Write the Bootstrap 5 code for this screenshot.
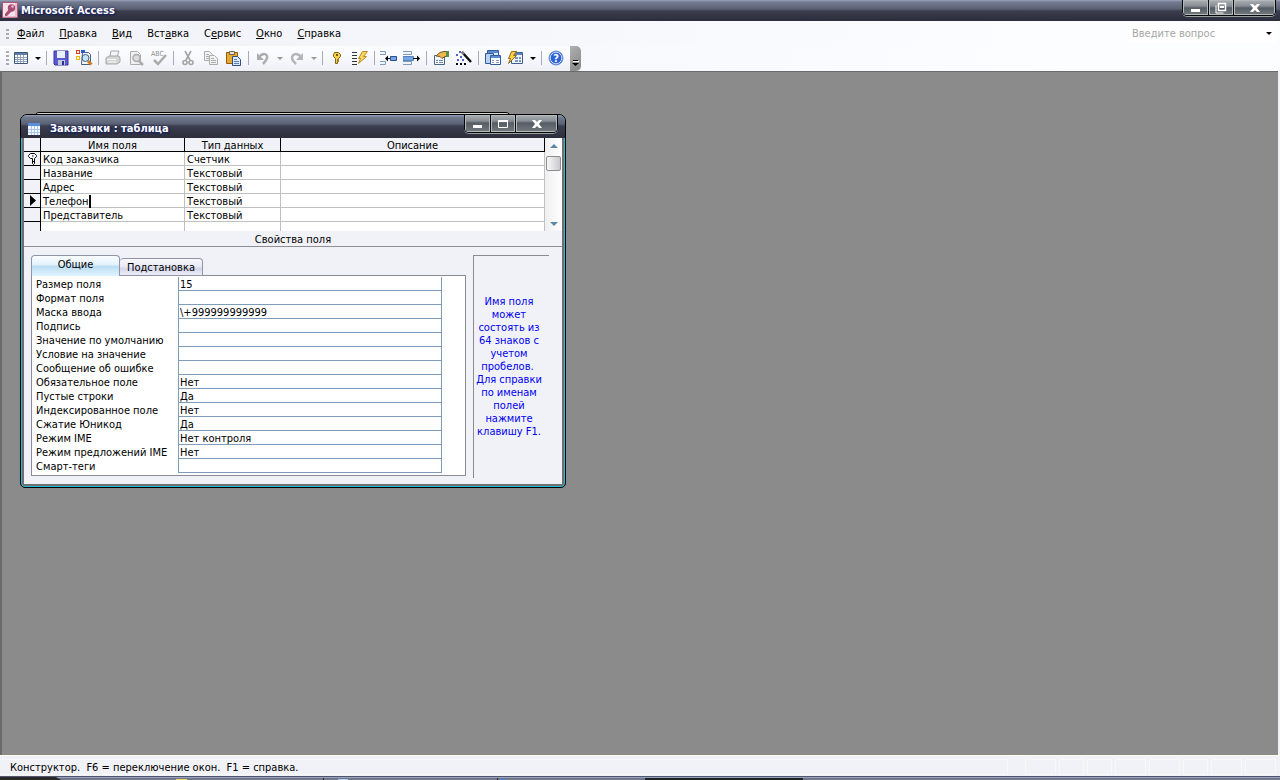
<!DOCTYPE html>
<html lang="ru">
<head>
<meta charset="utf-8">
<meta name="viewport" content="width=device-width, initial-scale=1">
<title>Microsoft Access</title>
<link href="https://cdn.jsdelivr.net/npm/bootstrap@5.3.0/dist/css/bootstrap.min.css" rel="stylesheet">
<style>
:root { --face:#f1f2f8; --grid:#7f9db9; }
body { font:11px/14px "DejaVu Sans Condensed","DejaVu Sans",sans-serif; color:#000; background:var(--face); }
button, input { font:inherit; color:inherit; background:none; border:0; padding:0; margin:0; border-radius:0; outline:0; }
svg { display:block; }
.caption-bar { background:linear-gradient(#9ba4bd 0,#737b90 2px,#5b6174 9px,#3a3d4e 11px,#2c2e3c 100%); color:#fff; font-weight:700; text-shadow:0 0 3px #1c2470,1px 1px 2px #101850; }
.app-caption { height:21px; padding-top:1px; }
.app-caption > svg { margin:1px 3px 0 2px; }
.app-caption .win-keys { margin-top:-1px; }
.win-keys { border:1px solid #050608; border-top:0; border-radius:0 0 5px 5px; box-shadow:0 1px 0 #98a0a0; overflow:hidden; }
.win-keys button { height:15px; background:linear-gradient(#aab0b5 0,#878d93 6px,#555c65 8px,#747c80 100%); box-shadow:inset 0 0 0 1px #b3b8bb; display:flex; align-items:center; justify-content:center; }
.doc-caption .win-keys button { height:17px; }
.win-keys button + button { border-left:1px solid #0c0d10; }
.key-n { width:25px; } .key-w { width:42px; }
.menu-strip { height:25px; padding-left:6px; background:linear-gradient(90deg,#f1f2f8,#fcfdff 85%); }
.menu-strip a { color:#000; padding:0 7px 0 8px; text-decoration:none; }
.grip { width:3px; height:10px; background:repeating-linear-gradient(#a9abb3 0 2px,transparent 2px 4px); }
.ask-box { width:148px; height:19px; background:#fff; }
.ask-box input::placeholder { color:#a6a6a6; opacity:1; }
.tool-strip { height:25px; padding-left:6px; background:linear-gradient(#fcfdff 0,#f8f9fd 45%,#eff0f6 100%); }
.tool-strip .grip { height:14px; margin-top:5px; }
.tool-shade { background:linear-gradient(90deg,#f3f4fa,#fcfdff 85%); }
.tool-strip .tb { width:23px; height:24px; display:flex; align-items:center; justify-content:center; }
.tool-strip .dd { width:11px; height:24px; display:flex; align-items:center; justify-content:center; }
.tri { border:3px solid transparent; border-top-color:#000; border-bottom:0; width:0; height:0; }
.tri.off { border-top-color:#9a9a9a; }
.sep { width:1px; height:14px; background:#a9abb2; margin:5px 2px 0 3px; }
.more-key { width:11px; height:25px; background:linear-gradient(135deg,#b0b0b0,#858585); border-radius:0 5px 5px 0; color:#000; }
.tool-strip .more-key { margin-left:3px; }
.desk { background:#8b8b8b; border:solid #6b6b6b; border-width:1px 0 0 2px; margin-right:2px; overflow:hidden; min-height:420px; }
.db-back { left:32px; top:40px; width:477px; height:60px; background:#d8d6cc; border:1px solid #000; border-radius:5px 5px 0 0; }
.doc-win { left:18px; top:42px; width:546px; border:1px solid #000; border-radius:7px 7px 5px 5px; background:#6f6f6f; box-shadow:inset 0 0 0 1px #1cc0d8; padding:0 2px 3px; overflow:hidden; }
.doc-caption { height:23px; margin:0 -2px; padding-left:3px; }
.doc-caption .win-keys { margin-right:7px; }
.doc-caption span { padding-left:10px; }
.doc-body { background:var(--face); margin-left:1px; margin-right:1px; }
.field-view { height:93px; overflow:hidden; background:#fff; }
.fields { border-collapse:separate; border-spacing:0; table-layout:fixed; width:521px; flex:none; }
.fields th, .fields td { height:14px; padding:2px 2px 0; line-height:11px; border-right:1px solid #c0c0c0; border-bottom:1px solid #c0c0c0; white-space:nowrap; font-weight:400; }
.fields thead th { background:var(--face); border-color:#000; text-align:center; padding:2px 0 0; }
.fields tbody th { background:var(--face); border-color:#000; padding:0; }
.fields th svg { margin:auto; }
.caret { position:relative; }
.caret::after { content:""; position:absolute; left:100%; top:0; width:2px; height:13px; background:#000; }
.v-scroll { width:17px; background:linear-gradient(90deg,#efeff0,#fff); padding:6px 0 5px; }
.v-scroll i { border:4px solid transparent; width:0; height:0; }
.v-scroll .up { border-top:0; border-bottom-color:#5d87a8; }
.v-scroll .down { border-bottom:0; border-top-color:#5d87a8; margin-top:auto; }
.thumb { width:15px; height:15px; margin-top:8px; border:1px solid #8d8d8d; border-radius:2px; background:linear-gradient(90deg,#f8f8f8,#c9c9ce); }
.part-title { height:16px; padding-top:1px; line-height:15px; border-bottom:1px solid #8e8e96; text-align:center; }
.props-pane { padding:8px 13px 6px 7px; }
.tab-row { height:21px; margin-bottom:-1px; }
.tab-key { border:1px solid #8f95a5; border-radius:4px 4px 0 0; height:18px; width:83px; padding-top:1px; line-height:16px; background:linear-gradient(#f9f9fd 0,#e6e7f4 50%,#d3d4e8 60%,#eeeefa 100%); }
.tab-key.on { width:89px; height:21px; line-height:18px; padding:0 0 2px; border-bottom:0; background:linear-gradient(#fafdff 0,#e3f1fb 45%,#b9dcf3 50%,#e1f4ff 100%); }
.tab-key + .tab-key { border-left:0; }
.sheet { border:1px solid #8c8a96; background:#fff; width:435px; padding:1px 23px 2px 4px; }
.prop { height:14px; }
.prop label { width:142px; flex:none; white-space:nowrap; line-height:15px; }
.prop input { height:14px; border:solid var(--grid); border-width:0 1px 1px; padding:1px 1px 0; line-height:12px; min-width:0; }
.hint { width:76px; margin-left:7px; border:solid #8c8c90; border-width:1px 0 0 1px; padding:39px 5px 0 0; color:#0000f0; line-height:13px; text-align:center; white-space:nowrap; height:223px; }
.status-bar { height:21px; border-top:1px solid #fcfce8; background:var(--face); padding:3px 4px 1px 0; gap:3px; }
.status-text { border:1px solid #f7f8f8; border-left:0; margin-right:14px; padding-left:10px; line-height:15px; }
.cell-s { border:1px solid #f8f8f6; width:25px; }
.cell-s.wide { width:31px; }
.task-edge { height:4px; border-top:1px solid #50566e; background:linear-gradient(#94a1be 0 1px,#737888 1px); }
</style>
</head>
<body class="d-flex flex-column vh-100 overflow-hidden">
<header>
  <div class="caption-bar app-caption d-flex">
    <svg width="16" height="16" viewBox="0 0 16 16"><rect x=".5" y=".5" width="15" height="15" fill="#f8e2ea" stroke="#b0587c"/><path d="M14 1v14H1" fill="none" stroke="#d59ab2"/><circle cx="9.500" cy="6" r="3.700" fill="#a84c72"/><path d="M7 7l-4 5v2h2l5-5z" fill="#a84c72"/><circle cx="10.500" cy="4.500" r="1.300" fill="#e9b8cc"/></svg>
    <span class="flex-grow-1 align-self-center">Microsoft Access</span>
    <div class="win-keys d-flex align-self-start me-1">
      <button class="key-n" aria-label="Свернуть"><svg width="11" height="11"><path d="M1 7h9v3H1z" fill="#fff"/></svg></button>
      <button class="key-n" aria-label="Восстановить"><svg width="12" height="12"><path d="M3.500 1.500h7v7h-7z" fill="none" stroke="#fff" stroke-width="1.500"/><path d="M5 4h4v2H5z" fill="#fff"/><path d="M1 3.500v7.500h7.500" fill="none" stroke="#fff"/></svg></button>
      <button class="key-w" aria-label="Закрыть"><svg width="12" height="10"><path d="M1 1h3l2 2 2-2h3L8 5l3 4H8L6 7 4 9H1l3-4z" fill="#fff"/></svg></button>
    </div>
  </div>
  <nav class="menu-strip d-flex align-items-center">
    <div class="grip"></div>
    <a href="#"><u>Ф</u>айл</a><a href="#"><u>П</u>равка</a><a href="#"><u>В</u>ид</a><a href="#">Вст<u>а</u>вка</a><a href="#">С<u>е</u>рвис</a><a href="#"><u>О</u>кно</a><a href="#"><u>С</u>правка</a>
    <div class="ask-box d-flex align-items-center ms-auto me-1 ps-1 pe-1">
      <input class="flex-grow-1 w-100" type="text" placeholder="Введите вопрос" aria-label="Введите вопрос">
      <button class="tri" aria-label="Список вопросов"></button>
    </div>
  </nav>
  <div class="tool-shade">
  <div class="tool-strip d-inline-flex align-items-start align-top" role="toolbar" aria-label="Конструктор таблиц">
    <div class="grip"></div>
    <button class="tb" aria-label="Вид"><svg width="16" height="16"><path d="M1.500 2.500h13v11h-13z" fill="#fff" stroke="#3c5878"/><path d="M2 3h12v2H2z" fill="#5d7fa6"/><path d="M4.500 5v8M7.500 5v8M10.500 5v8M2 7.500h12M2 9.500h12M2 11.500h12" stroke="#93a3b6"/></svg></button>
    <button class="dd" aria-label="Виды"><span class="tri"></span></button>
    <span class="sep"></span>
    <button class="tb" aria-label="Сохранить"><svg width="16" height="16"><path d="M1 1h14v14H2l-1-1z" fill="#5a5ad0" stroke="#3434a0"/><path d="M4 1h8v7H4z" fill="#e6efff"/><path d="M5 10h7v5H5z" fill="#c8c8dc"/><path d="M9 11h2v4H9z" fill="#2d2d8c"/></svg></button>
    <button class="tb" aria-label="Поиск файлов"><svg width="18" height="17"><path d="M7.500 2.500h6l2 2v10h-9z" fill="#f4f8fd" stroke="#44607f"/><path d="M1 0h4v4H1z" fill="#e03818"/><path d="M2 1h2v2H2z" fill="#fff"/><path d="M6 0h4v3H6z" fill="#2860d0"/><path d="M1 6h4v4H1z" fill="#f1b900"/><path d="M2 7h2v2H2z" fill="#fff"/><circle cx="10.500" cy="8" r="3.500" fill="#c3e4f8" stroke="#48617c"/><path d="M13 11l3.500 3.500" stroke="#d47b20" stroke-width="3"/></svg></button>
    <span class="sep"></span>
    <button class="tb" aria-label="Печать" disabled><svg width="16" height="16" stroke="#a7a7a7"><path d="M5 6l1-5h8l-2 6" fill="#f4f4f4"/><path d="M1 8l3-2h10l1 2v4l-3 2H1z" fill="#d4d4d4"/><path d="M2 9.500h9M3 12h8M7 3.500h5" fill="none" stroke="#f8f8f8"/></svg></button>
    <button class="tb" aria-label="Предварительный просмотр" disabled><svg width="16" height="16" stroke="#acacac"><path d="M2.500 1.500h7l3 3v10h-10z" fill="#f1f1f1"/><circle cx="8.500" cy="8" r="3.500" fill="#dcdcdc" stroke-width="1.500"/><path d="M11 11l4 4" stroke-width="2.500"/></svg></button>
    <button class="tb" aria-label="Орфография" disabled><svg width="16" height="17"><text x="0" y="6" font-size="7" fill="#8f8f8f">ABC</text><path d="M3 10l4 4 8-9" fill="none" stroke="#ababab" stroke-width="2.500"/></svg></button>
    <span class="sep"></span>
    <button class="tb" aria-label="Вырезать" disabled><svg width="12" height="16" fill="none" stroke="#a4a4a4" stroke-width="1.600"><path d="M3 1l5 9M9 1L4 10"/><circle cx="3" cy="12.500" r="2"/><circle cx="9" cy="12.500" r="2"/></svg></button>
    <button class="tb" aria-label="Копировать" disabled><svg width="16" height="16" fill="#f2f2f2" stroke="#adadad"><path d="M1.500 1.500h5l3 3v6h-8z"/><path d="M6.500 5.500h5l3 3v6h-8z"/><path d="M3 4.500h3M3 6.500h3M3 8.500h3M8 8.500h3M8 10.500h5M8 12.500h5"/></svg></button>
    <button class="tb" aria-label="Вставить"><svg width="17" height="16"><path d="M1.500 2.500h11v11h-11z" fill="#e7aa32" stroke="#965b12"/><path d="M4.500 1.500h5v3h-5z" fill="#ece5cb" stroke="#6f6650"/><path d="M7.500 6.500h5l3 3v6h-8z" fill="#dcebff" stroke="#314f85"/><path d="M9 9.500h3M9 11.500h5M9 13.500h5" stroke="#5b80b5"/></svg></button>
    <span class="sep"></span>
    <button class="tb" aria-label="Отменить" disabled><svg width="14" height="14"><path d="M3 6c4-5 9-3 8 1-.5 2-2 4-4 6" fill="none" stroke="#acacac" stroke-width="2.500"/><path d="M1 2v7h7z" fill="#acacac"/></svg></button>
    <button class="dd" aria-label="История отмены" disabled><span class="tri off"></span></button>
    <button class="tb" aria-label="Вернуть" disabled><svg width="14" height="14"><path d="M11 6C7 1 2 3 2 7c0 2 2 4 4 6" fill="none" stroke="#b4b4b4" stroke-width="2.500"/><path d="M13 2v7H6z" fill="#b4b4b4"/></svg></button>
    <button class="dd" aria-label="История возврата" disabled><span class="tri off"></span></button>
    <span class="sep"></span>
    <button class="tb" aria-label="Ключевое поле"><svg width="10" height="14"><path d="M2.500 1.500h4l2 2v2l-2 2v1h-1v1h1v1h-1v2h-2v-5l-2-2v-2z" fill="#f4d04c" stroke="#806212"/><path d="M4 3h2v2H4z" fill="#765b15"/></svg></button>
    <button class="tb" aria-label="Индексы"><svg width="16" height="16"><path d="M0 2.500h5M0 5.500h5M0 8.500h5M0 11.500h5M0 14.500h5" stroke="#333"/><path d="M10.500 1.500h5l-4 5h3l-8 7 2-5h-2z" fill="#fbd65a" stroke="#b98a26"/></svg></button>
    <span class="sep"></span>
    <button class="tb" aria-label="Добавить строки"><svg width="17" height="16"><path d="M0 1.500h5.500v3H0M0 11.500h5.500v3H0" fill="#edf4ff" stroke="#819abb"/><path d="M10.500 6.500h6v4h-6z" fill="#75a5e2" stroke="#264e91"/><path d="M6 8.500h4" stroke="#111"/><path d="M5 8.500l3-3v6z"/></svg></button>
    <button class="tb" aria-label="Удалить строки"><svg width="17" height="16"><path d="M0 1.500h8.500v3H0M0 11.500h8.500v3H0" fill="#edf4ff" stroke="#819abb"/><path d="M0 6.500h10.500v4H0z" fill="#75a5e2" stroke="#5383c2"/><path d="M10 8.500h5" stroke="#111"/><path d="M17 8.500l-3-3v6z"/></svg></button>
    <span class="sep"></span>
    <button class="tb" aria-label="Свойства"><svg width="16" height="16"><path d="M1.500 5.500h10v9h-10z" fill="#f4f8ff" stroke="#4a6488"/><path d="M3 10.500h2M6 10.500h4M3 12.500h2M6 12.500h4" stroke="#6e86a8"/><path d="M3 6l4-3.500 4-1h4v5h-3l-3 2-2-2z" fill="#efb94a" stroke="#75521d"/><path d="M13 1h3v6h-3z" fill="#578d4a"/></svg></button>
    <button class="tb" aria-label="Построить"><svg width="17" height="16"><path d="M7 2l9 10" stroke="#111" stroke-width="2.500"/><path d="M7 2l2 2" stroke="#888" stroke-width="2"/><path d="M4 1h2v2H4zM1 4h2v2H1zM5 6h2v2H5zM2 9h2v2H2zM7 9h2v2H7z" fill="#5560c6"/><path d="M1 13h2v2H1zM5 13h2v2H5zM9 13h2v2H9z"/></svg></button>
    <span class="sep"></span>
    <button class="tb" aria-label="Окно базы данных"><svg width="17" height="16" stroke="#315b9b"><path d="M3.500.500h11v9h-11z" fill="#dbe9ff"/><path d="M1.500 3.500h8v10h-8z" fill="#b8d0f3"/><path d="M6.500 5.500h10v9h-10z" fill="#fff"/><path d="M7 7h9M4 2h10" stroke="#5b8bd4" stroke-width="2"/><path d="M8 10.500h2M12 10.500h3M8 12.500h2M12 12.500h3" stroke="#7c9bc8"/></svg></button>
    <button class="tb" aria-label="Новый объект"><svg width="17" height="16"><path d="M4.500 2.500h11v11h-11z" fill="#eef4ff" stroke="#3c5e91"/><path d="M5 3h10v2H5z" fill="#5b84c0"/><path d="M8 7h3v2H8zM12 7h2v2h-2zM8 10h3v2H8zM12 10h2v2h-2z" fill="#7b94b9"/><path d="M4.500 1.500h5l-3 4h3l-8 8 2-5h-2z" fill="#fbd04a" stroke="#9a6911"/></svg></button>
    <button class="dd" aria-label="Типы объектов"><span class="tri"></span></button>
    <span class="sep"></span>
    <button class="tb" aria-label="Справка"><svg width="16" height="16"><circle cx="8" cy="8" r="7" fill="#2e62d4" stroke="#6a8fd8"/><circle cx="8" cy="8" r="5.800" fill="none" stroke="#c8dcff"/><text x="8" y="12" font-size="11" font-weight="700" fill="#fff" text-anchor="middle">?</text></svg></button>
    <button class="more-key d-flex flex-column align-items-center justify-content-end pb-1" aria-label="Параметры панели"><svg width="7" height="8"><path d="M1 1.500h5" stroke="#000"/><path d="M0 4h7L3.500 7z"/><path d="M1 2.500h6" stroke="#fff"/></svg></button>
  </div>
  </div>
</header>

<main class="desk position-relative flex-grow-1">
  <div class="db-back position-absolute"></div>
  <section class="doc-win position-absolute">
    <div class="caption-bar doc-caption d-flex align-items-center">
      <svg class="mt-1 ms-1" width="12" height="12"><path d="M0 0h12v12H0z" fill="#f3f8ff"/><path d="M0 0h12v3H0z" fill="#5c8fdb"/><path d="M3.500 3v9M6.500 3v9M9.500 3v9M0 6.500h12M0 9.500h12" stroke="#a9c5ec"/></svg>
      <span class="flex-grow-1 pt-1">Заказчики : таблица</span>
      <div class="win-keys d-flex align-self-start">
        <button class="key-n" aria-label="Свернуть"><svg width="11" height="11"><path d="M1 7h9v3H1z" fill="#fff"/></svg></button>
        <button class="key-n" aria-label="Развернуть"><svg width="12" height="10"><path d="M1.500 1.500h9v7h-9z" fill="none" stroke="#fff"/><path d="M1 1h10v2H1z" fill="#fff"/></svg></button>
        <button class="key-w" aria-label="Закрыть"><svg width="12" height="10"><path d="M1 1h3l2 2 2-2h3L8 5l3 4H8L6 7 4 9H1l3-4z" fill="#fff"/></svg></button>
      </div>
    </div>
    <div class="doc-body">
      <div class="field-view d-flex">
        <table class="fields">
          <colgroup><col style="width:17px"><col style="width:144px"><col style="width:96px"><col></colgroup>
          <thead><tr><th></th><th>Имя поля</th><th>Тип данных</th><th>Описание</th></tr></thead>
          <tbody>
            <tr><th><svg width="9" height="12" fill="#fff" stroke="#000"><path d="M2.500.5h4l2 2v1l-2 2v5l-1 1-1-1v-5h-2l-2-2v-1z"/><path d="M4 3h1.500M5 8.500h2" /></svg></th><td>Код заказчика</td><td>Счетчик</td><td></td></tr>
            <tr><th></th><td>Название</td><td>Текстовый</td><td></td></tr>
            <tr><th></th><td>Адрес</td><td>Текстовый</td><td></td></tr>
            <tr><th><svg width="8" height="11"><path d="M2 0l6 5.500L2 11z"/></svg></th><td><span class="caret">Телефон</span></td><td>Текстовый</td><td></td></tr>
            <tr><th></th><td>Представитель</td><td>Текстовый</td><td></td></tr>
            <tr><th></th><td></td><td></td><td></td></tr>
          </tbody>
        </table>
        <div class="v-scroll d-flex flex-column align-items-center"><i class="up"></i><span class="thumb"></span><i class="down"></i></div>
      </div>
      <div class="part-title">Свойства поля</div>
      <div class="props-pane d-flex">
        <div>
          <div class="tab-row d-flex align-items-end position-relative" role="tablist">
            <button class="tab-key on" role="tab" aria-selected="true">Общие</button><button class="tab-key" role="tab" aria-selected="false">Подстановка</button>
          </div>
          <form class="sheet">
            <div class="prop d-flex"><label for="p1">Размер поля</label><input class="flex-grow-1" id="p1" value="15"></div>
            <div class="prop d-flex"><label for="p2">Формат поля</label><input class="flex-grow-1" id="p2"></div>
            <div class="prop d-flex"><label for="p3">Маска ввода</label><input class="flex-grow-1" id="p3" value="\+999999999999"></div>
            <div class="prop d-flex"><label for="p4">Подпись</label><input class="flex-grow-1" id="p4"></div>
            <div class="prop d-flex"><label for="p5">Значение по умолчанию</label><input class="flex-grow-1" id="p5"></div>
            <div class="prop d-flex"><label for="p6">Условие на значение</label><input class="flex-grow-1" id="p6"></div>
            <div class="prop d-flex"><label for="p7">Сообщение об ошибке</label><input class="flex-grow-1" id="p7"></div>
            <div class="prop d-flex"><label for="p8">Обязательное поле</label><input class="flex-grow-1" id="p8" value="Нет"></div>
            <div class="prop d-flex"><label for="p9">Пустые строки</label><input class="flex-grow-1" id="p9" value="Да"></div>
            <div class="prop d-flex"><label for="p10">Индексированное поле</label><input class="flex-grow-1" id="p10" value="Нет"></div>
            <div class="prop d-flex"><label for="p11">Сжатие Юникод</label><input class="flex-grow-1" id="p11" value="Да"></div>
            <div class="prop d-flex"><label for="p12">Режим IME</label><input class="flex-grow-1" id="p12" value="Нет контроля"></div>
            <div class="prop d-flex"><label for="p13">Режим предложений IME</label><input class="flex-grow-1" id="p13" value="Нет"></div>
            <div class="prop d-flex"><label for="p14">Смарт-теги</label><input class="flex-grow-1" id="p14"></div>
          </form>
        </div>
        <div class="hint">Имя поля<br>может<br>состоять из<br>64 знаков с<br>учетом<br>пробелов.&nbsp;<br>Для справки<br>по именам<br>полей<br>нажмите<br>клавишу F1.</div>
      </div>
    </div>
  </section>
</main>

<footer>
  <div class="status-bar d-flex">
    <div class="status-text flex-grow-1">Конструктор.&nbsp; F6 = переключение окон.&nbsp; F1 = справка.</div>
    <span class="cell-s wide"></span><span class="cell-s"></span><span class="cell-s"></span><span class="cell-s wide"></span><span class="cell-s wide"></span><span class="cell-s"></span><span class="cell-s wide"></span><span class="cell-s wide"></span>
  </div>
  <div class="task-edge d-flex"><svg width="100%" height="3"><path d="M0 0h56l5 3H0z" fill="#2a2828"/><path d="M176 2h11v1h-11z" fill="#f4d66a"/><path d="M323 1h1v2h-1zM497 1h1v2h-1z" fill="#24262e"/><path d="M338 2h10v1h-10z" fill="#b4cff0"/><path d="M500 2h5v1h-5z" fill="#3d7fe8"/><path d="M645 1h158v2H645z" fill="#222226"/></svg></div>
</footer>
<script src="https://cdn.jsdelivr.net/npm/bootstrap@5.3.0/dist/js/bootstrap.bundle.min.js"></script>
</body>
</html>
